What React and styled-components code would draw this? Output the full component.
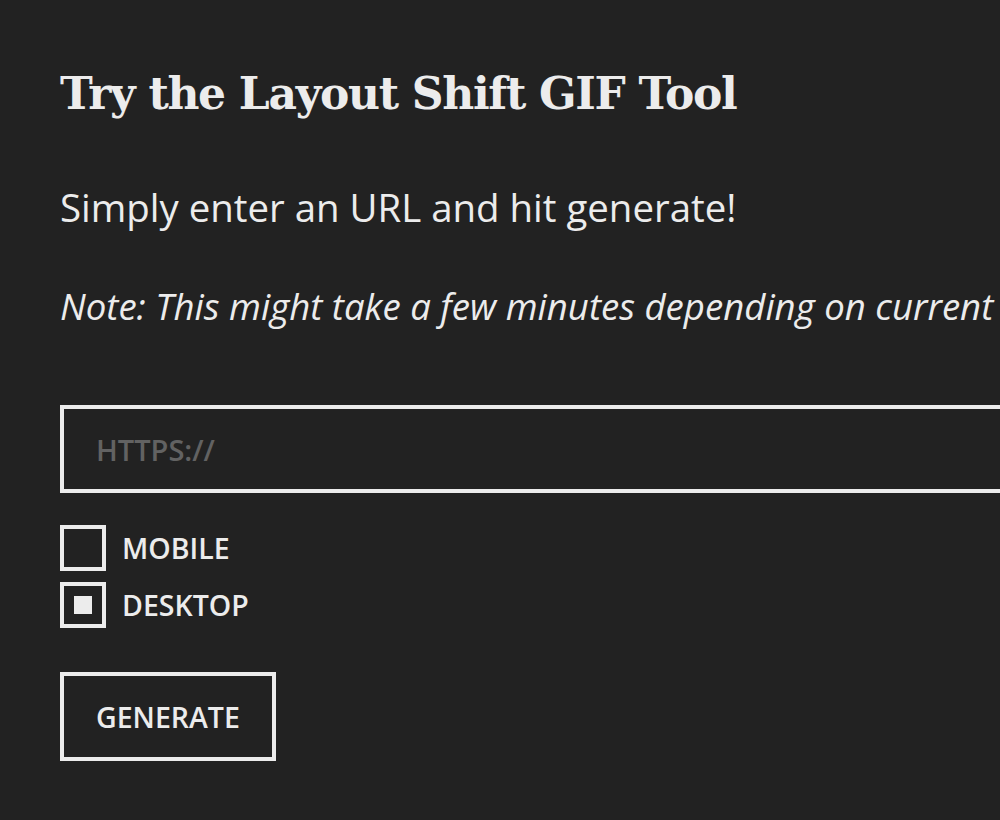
import { useState } from "react";
import styled, { createGlobalStyle } from "styled-components";

const GlobalStyle = createGlobalStyle`
  html, body {
    margin: 0;
    padding: 0;
    background: #222222;
    overflow: hidden;
  }
  body {
    color: #ececec;
    font-family: "Open Sans", "Liberation Sans", sans-serif;
  }
`;

const App = () => {
  const [device, setDevice] = useState("desktop");

  return (
    <>
      <GlobalStyle />
      <ToolSection>
        <Title>Try the Layout Shift GIF Tool</Title>
        <Lead>Simply enter an URL and hit generate!</Lead>
        <Note>Note: This might take a few minutes depending on current</Note>
        <Form onSubmit={(e) => e.preventDefault()}>
          <UrlInput type="text" placeholder="https://" />
          <Options>
            <Option>
              <HiddenBox
                type="checkbox"
                checked={device === "mobile"}
                onChange={() => setDevice("mobile")}
              />
              <Box $checked={device === "mobile"} />
              Mobile
            </Option>
            <Option>
              <HiddenBox
                type="checkbox"
                checked={device === "desktop"}
                onChange={() => setDevice("desktop")}
              />
              <Box $checked={device === "desktop"} />
              Desktop
            </Option>
          </Options>
          <Button type="submit">Generate</Button>
        </Form>
      </ToolSection>
    </>
  );
};

export default App;

const ToolSection = styled.section`
  width: 1400px;
  padding: 58px 60px 0 60px;
  box-sizing: border-box;
`;

const Title = styled.h2`
  margin: 0;
  font-family: "DejaVu Serif", "Liberation Serif", serif;
  font-weight: 700;
  font-size: 44px;
  line-height: 72px;
  letter-spacing: -1.3px;
`;

const Lead = styled.p`
  margin: 50px 0 0 0;
  font-size: 38.4px;
  line-height: 54px;
  white-space: nowrap;
`;

const Note = styled(Lead)`
  margin-top: 45px;
  font-size: 36.6px;
  font-style: italic;
`;

const Form = styled.form`
  margin-top: 72px;
  display: flex;
  flex-direction: column;
  align-items: flex-start;
`;

const UrlInput = styled.input`
  width: 100%;
  height: 88px;
  box-sizing: border-box;
  border: 4px solid #ececec;
  background: transparent;
  color: #ececec;
  padding: 0 32px;
  font-family: "Open Sans", "Liberation Sans", sans-serif;
  font-weight: 600;
  font-size: 29px;
  text-transform: uppercase;
  outline: none;

  &::placeholder {
    color: #626262;
  }
`;

const Options = styled.div`
  margin-top: 32px;
  display: flex;
  flex-direction: column;
  gap: 11px;
`;

const Option = styled.label`
  display: flex;
  align-items: center;
  gap: 16px;
  font-weight: 600;
  font-size: 28.5px;
  text-transform: uppercase;
  cursor: pointer;
`;

const HiddenBox = styled.input`
  position: absolute;
  opacity: 0;
  width: 0;
  height: 0;
`;

const Box = styled.span`
  width: 46px;
  height: 46px;
  box-sizing: border-box;
  border: 4px solid #ececec;
  display: flex;
  align-items: center;
  justify-content: center;

  &::after {
    content: "";
    width: 18px;
    height: 18px;
    background: #ececec;
    display: ${(p) => (p.$checked ? "block" : "none")};
  }
`;

const Button = styled.button`
  margin-top: 44px;
  height: 89px;
  padding: 0 32px;
  border: 4px solid #ececec;
  background: transparent;
  color: #ececec;
  font-family: "Open Sans", "Liberation Sans", sans-serif;
  font-weight: 600;
  font-size: 28.5px;
  text-transform: uppercase;
  cursor: pointer;
`;
